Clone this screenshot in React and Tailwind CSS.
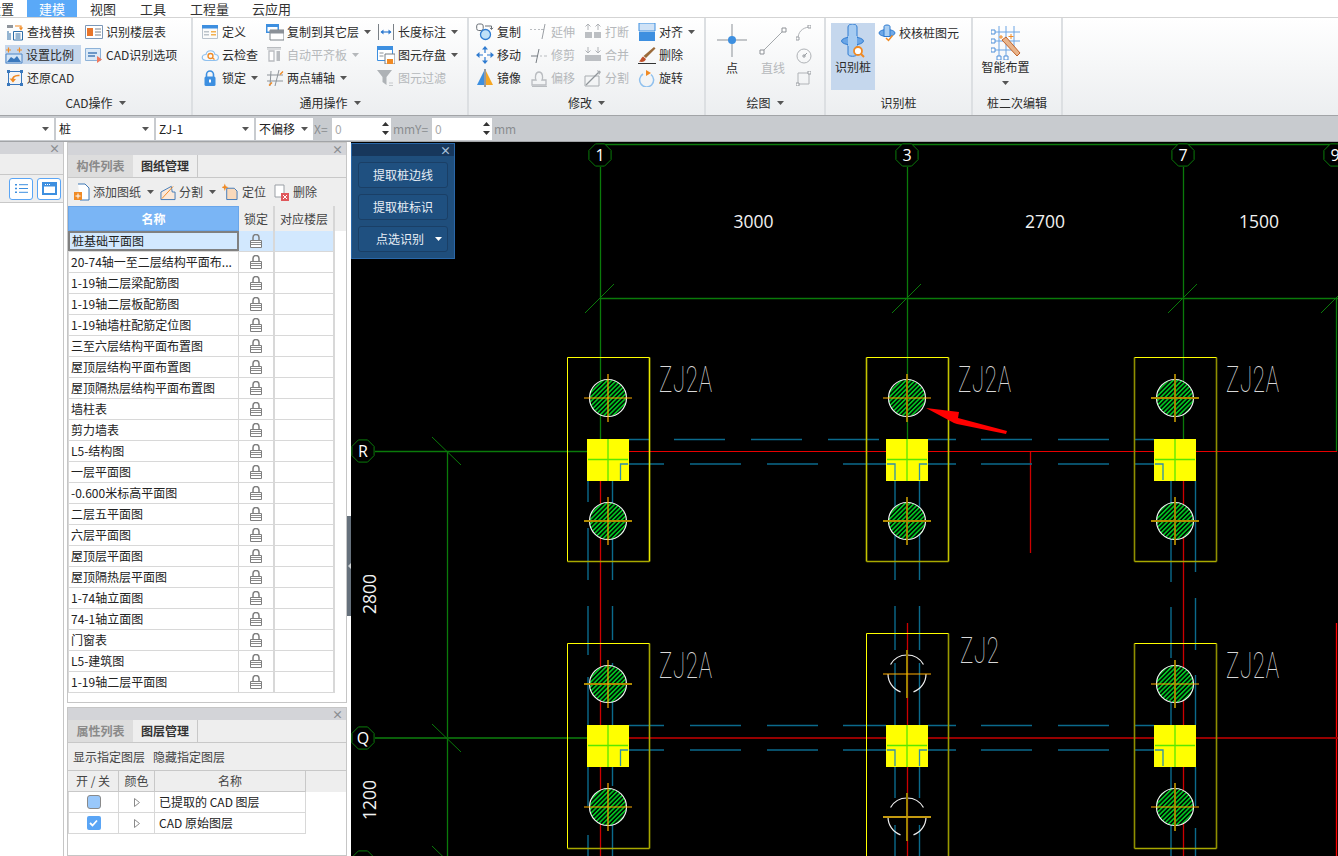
const files = [
  "桩基础平面图",
  "20-74轴一至二层结构平面布...",
  "1-19轴二层梁配筋图",
  "1-19轴二层板配筋图",
  "1-19轴墙柱配筋定位图",
  "三至六层结构平面布置图",
  "屋顶层结构平面布置图",
  "屋顶隔热层结构平面布置图",
  "墙柱表",
  "剪力墙表",
  "L5-结构图",
  "一层平面图",
  "-0.600米标高平面图",
  "二层五平面图",
  "六层平面图",
  "屋顶层平面图",
  "屋顶隔热层平面图",
  "1-74轴立面图",
  "74-1轴立面图",
  "门窗表",
  "L5-建筑图",
  "1-19轴二层平面图",
];

const BLUE = "#3d8fe0";
const ORANGE = "#f08a24";
const GRAY = "#b9bcc0";

function Svg({ size = 18, children, className = "" }) {
  return (
    <svg width={size} height={size} viewBox="0 0 18 18" fill="none" className={`shrink-0 ${className}`}>
      {children}
    </svg>
  );
}

const icons = {
  findReplace: (
    <Svg>
      <path d="M1 2h6v3H1z" fill="#8f959c" />
      <path d="M9 3h6v3M13.500 4.500L15 6.500 16.500 4.500" stroke={ORANGE} strokeWidth="1.200" />
      <path d="M7.500 8.500h9v8.500h-9z" stroke="#2f6ea8" />
      <path d="M9.500 11h5M9.500 13h5M9.500 15h5" stroke="#2f6ea8" />
      <path d="M2 8v9M4 10v7" stroke="#2f6ea8" />
    </Svg>
  ),
  scale: (
    <Svg>
      <path d="M1 8h16v9H1z" fill="#d5e5f5" stroke="#4f86c6" />
      <path d="M2 16l4-5 3 2 3-3 4 6z" fill="#3a78bd" />
      <path d="M1 4h5M3.500 1.500v5M12 4h5M14.500 1.500v5" stroke={ORANGE} strokeWidth="1.200" />
    </Svg>
  ),
  restore: (
    <Svg>
      <path d="M2.500 2.500h13v13h-13z" stroke="#3a78bd" />
      <path d="M1 1h3v3H1zM14 1h3v3h-3zM1 14h3v3H1zM14 14h3v3h-3z" fill="#3a78bd" />
      <path d="M7 12.500c-1.500-4 1.500-6.500 6.500-6" stroke={ORANGE} strokeWidth="1.600" />
      <path d="M3.500 9.500l3.500 4 3-3.500z" fill={ORANGE} />
    </Svg>
  ),
  floorTable: (
    <Svg>
      <path d="M.5 2.500h17v13H.5z" fill="#fff" stroke="#7c98b8" />
      <path d="M2 5h6v8H2z" fill="#e8752a" />
      <path d="M10 6h6M10 9h6M10 12h6" stroke="#7a8088" />
    </Svg>
  ),
  cadOption: (
    <Svg>
      <path d="M.5 2.500h15v12H.5z" fill="#dbe9f7" stroke="#8db2d8" />
      <path d="M3 7h9M3 10h7" stroke="#6b97c7" strokeWidth="2" />
      <path d="M12 10l5 3.500-5 3.500z" fill="#f07a60" />
    </Svg>
  ),
  define: (
    <Svg>
      <path d="M1.500 2.500h15v13h-15z" fill="#fbfbfb" stroke="#b9c2cc" />
      <path d="M1 2h16v3.500H1z" fill={BLUE} />
      <path d="M3 8h5v1.500H3zM3 11h5v1.500H3z" fill="#bcc3ca" />
      <path d="M10 8h5v1.500h-5zM10 11h5v1.500h-5z" fill="#f3b04f" />
    </Svg>
  ),
  cloud: (
    <Svg>
      <path d="M5 14.500c-5 0-5-6 0-6 1-5 8-5 9 0 4.500 0 4.500 6 0 6z" fill="#f6fafe" stroke="#8fc0ee" strokeWidth="1.200" />
      <circle cx="9.500" cy="10" r="2.500" stroke={ORANGE} strokeWidth="1.300" />
      <path d="M11.500 12l2 1.500" stroke={ORANGE} strokeWidth="1.300" />
    </Svg>
  ),
  lock: (
    <Svg>
      <path d="M5.500 8V5.500a3.500 3.500 0 017 0V8" stroke={BLUE} strokeWidth="1.600" />
      <rect x="3.500" y="7.500" width="11" height="9.500" rx="1.500" fill={BLUE} />
      <path d="M8 10.500h2v3H8z" fill="#fff" />
    </Svg>
  ),
  copyFloor: (
    <Svg>
      <path d="M0 1h13v9H0z" fill={BLUE} />
      <path d="M1.500 4h10v4.500h-10z" fill="#fff" />
      <path d="M4 7h14v10H4z" fill="#fff" stroke="#7d8389" />
      <path d="M4 7h14v3.500H4z" fill="#8b9198" />
    </Svg>
  ),
  autoAlign: (
    <Svg>
      <path d="M1 1.500h14M1 3h14" stroke={GRAY} />
      <path d="M3 5h5v10H3z" fill="#fff" stroke={GRAY} strokeWidth="1.300" />
      <path d="M10.500 5h3.500v10h-3.500z" fill={GRAY} />
    </Svg>
  ),
  twoPoint: (
    <Svg>
      <path d="M1 6h16M1 12h16M5 2l-1 15M13 1L9 17" stroke="#8d9399" />
      <path d="M3 16.500l3-3M14 5.500l3-3" stroke={ORANGE} strokeWidth="1.300" />
    </Svg>
  ),
  dimension: (
    <Svg>
      <path d="M1.500 1v16M16.500 1v16" stroke="#7a8086" />
      <path d="M4 9h10" stroke="#2f7bd0" strokeWidth="1.200" />
      <path d="M3.500 9l3-2.500v5zM14.500 9l-3-2.500v5z" fill="#2f7bd0" />
    </Svg>
  ),
  save: (
    <Svg>
      <path d="M.5 .5h15v14h-15z" fill="#fff" stroke={BLUE} />
      <path d="M0 0h16v4H0z" fill={BLUE} />
      <path d="M2.500 7h4M2.500 10h4" stroke="#8c9298" />
      <path d="M8 8h10v10H8z" fill="#fff" stroke="#777d83" />
      <path d="M10 13h6v5h-6z" fill={ORANGE} />
    </Svg>
  ),
  filter: (
    <Svg>
      <path d="M0 1h15L9.500 8v8l-4-3V8z" fill="#aeb2b6" />
      <path d="M12 14h4M12 16.500h4" stroke="#c6c9cc" />
    </Svg>
  ),
  copy: (
    <Svg>
      <rect x=".7" y="1" width="6.500" height="6.500" rx="2" stroke="#6b7178" />
      <circle cx="9.500" cy="11.500" r="5" fill="#bfe0f8" stroke="#2f7bd0" strokeWidth="1.300" />
      <path d="M9 3h6.500v3M14 4.800L15.500 6.500 17 4.800" stroke="#6b7178" />
    </Svg>
  ),
  extend: (
    <Svg>
      <path d="M0 6.500h2M4 6.500h2M8 6.500h2M11 6.500h3" stroke={GRAY} />
      <path d="M15 1l-3 15" stroke="#9b9fa4" />
    </Svg>
  ),
  trim: (
    <Svg>
      <path d="M1 10h7" stroke="#777d83" />
      <path d="M9 3L6 17" stroke="#777d83" />
      <path d="M10 10h2M14 10h3" stroke={GRAY} />
    </Svg>
  ),
  move: (
    <Svg>
      <path d="M9 1v16M1 9h16" stroke="#2f7bd0" strokeWidth="1.200" />
      <path d="M9 0l3 3.500H6zM9 18l3-3.500H6zM0 9l3.500-3v6zM18 9l-3.500-3v6z" fill="#2f7bd0" />
      <path d="M7 7h4v4H7z" fill="#fff" />
    </Svg>
  ),
  mirror: (
    <Svg>
      <path d="M8 2L1 16h7z" fill={BLUE} />
      <path d="M10 2l7 14h-7z" fill="#f6a623" />
      <path d="M9 0v18" stroke="#3b4046" />
    </Svg>
  ),
  breakIcon: (
    <Svg>
      <path d="M1 9h7v6H1zM10 9h7v6h-7z" fill="#bcbfc3" />
      <path d="M4 1v6M1.500 3.500L4 1l2.500 2.500M14 1v6M11.500 3.500L14 1l2.500 2.500" stroke="#b0b3b7" />
    </Svg>
  ),
  merge: (
    <Svg>
      <path d="M1 9h16v6H1z" fill="#bcbfc3" />
      <path d="M4 1v6M1.500 4.500L4 7l2.500-2.500M14 1v6M11.500 4.500L14 7l2.500-2.500" stroke="#b0b3b7" />
    </Svg>
  ),
  offset: (
    <Svg>
      <path d="M2 16v-5h4c-1-2-1-8 3-8s4 6 3 8h4v5z" stroke={GRAY} strokeWidth="1.300" />
      <path d="M2 17.500h15" stroke={GRAY} />
    </Svg>
  ),
  split: (
    <Svg>
      <path d="M1 7h14v10H1z" stroke="#a9adb1" />
      <path d="M2 16L16 2" stroke="#8f9499" strokeWidth="1.200" />
      <path d="M13 1l4 2-2 3z" fill="#a9adb1" />
    </Svg>
  ),
  align: (
    <Svg>
      <path d="M1 0h16v8H1z" fill="#cfe2f6" stroke={BLUE} />
      <path d="M1 9h16v9H1z" fill={BLUE} />
    </Svg>
  ),
  brush: (
    <Svg>
      <path d="M16 1l1.500 1.500L8 12 5.500 10z" fill="#9a6a3a" />
      <path d="M5 10.500l3 2.500c-1 3-4 3.500-7 2.500 1.500-1 2-3.500 4-5z" fill="#c0502a" />
      <path d="M0 17.500h18" stroke="#333" />
    </Svg>
  ),
  rotate: (
    <Svg>
      <path d="M5 5a7 7 0 108 .5" stroke="#8fc0ee" strokeWidth="1.500" />
      <path d="M8 1v6l5-3z" fill={ORANGE} />
    </Svg>
  ),
  pileCheck: (
    <Svg>
      <ellipse cx="9" cy="9" rx="8" ry="3.500" fill="#6fa8e6" stroke="#2f7bd0" />
      <path d="M6 2.500c0-2 6-2 6 0v10H6z" fill="#a9cef2" stroke="#2f7bd0" />
      <path d="M8 14l2.500 2.500 4-5" stroke={ORANGE} strokeWidth="1.500" />
    </Svg>
  ),
};

function Caret({ color = "#555" }) {
  return (
    <svg width="7" height="4" viewBox="0 0 7 4" className="shrink-0">
      <path d="M0 0h7L3.500 4z" fill={color} />
    </svg>
  );
}

function Tool({ icon, label, caret, off, active, className = "" }) {
  return (
    <div className={`flex h-[19px] items-center whitespace-nowrap ${active ? "bg-[#c5d7ed]" : ""} ${className}`}>
      {icons[icon]}
      <span className={`ml-[3px] ${off ? "text-[#b5b8bb]" : "text-[#2b2b2b]"}`}>{label}</span>
      {caret && (
        <span className="ml-[5px]">
          <Caret color={off ? "#b5b8bb" : "#555"} />
        </span>
      )}
    </div>
  );
}

function Group({ title, caret, width, children }) {
  return (
    <div className="flex h-full shrink-0 flex-col border-r-2 border-[#dcdfe2]" style={{ width }}>
      <div className="flex-1">{children}</div>
      <div className="mb-[3px] flex h-[18px] items-center justify-center gap-[6px] text-[#2b2b2b]">
        {title}
        {caret && <Caret />}
      </div>
    </div>
  );
}

function Stack({ className = "", children }) {
  return <div className={`flex flex-col gap-[4px] ${className}`}>{children}</div>;
}

function Select({ value, className = "" }) {
  return (
    <div className={`flex h-[22px] items-center justify-between bg-white pl-[3px] pr-[5px] text-[#222] ${className}`}>
      <span>{value}</span>
      <Caret />
    </div>
  );
}

function Spin({ className = "" }) {
  return (
    <div className={`flex h-[22px] items-center justify-between bg-white pl-[3px] pr-[2px] text-[#aaa] ${className}`}>
      0
      <div className="flex flex-col gap-[5px]">
        <svg width="7" height="4"><path d="M0 4h7L3.5 0z" fill="#333" /></svg>
        <Caret color="#333" />
      </div>
    </div>
  );
}

function PointIcon() {
  return (
    <svg width="30" height="34" viewBox="0 0 30 34">
      <path d="M0 16h30M15 0v33" stroke="#8b9197" />
      <circle cx="15" cy="16" r="4" fill={BLUE} />
    </svg>
  );
}

function LineIcon() {
  return (
    <svg width="30" height="30" viewBox="0 0 30 30">
      <path d="M4 26L26 4" stroke="#a4a8ac" />
      <path d="M2 24h4v4H2zM24 2h4v4h-4z" fill="#fff" stroke="#8d9196" />
    </svg>
  );
}

function PileIcon() {
  return (
    <svg width="26" height="36" viewBox="0 0 26 36">
      <path d="M8 3c0-4 9-4 9 0v27c0 3-9 3-9 0z" fill="#a6cbf1" stroke="#2f7bd0" />
      <ellipse cx="12.500" cy="17" rx="11" ry="4" fill="#6aa5e6" stroke="#2f7bd0" />
      <path d="M8 12h9v10H8z" fill="#a6cbf1" />
      <circle cx="18" cy="27" r="4" fill="#fff" stroke={ORANGE} strokeWidth="1.800" />
      <path d="M21 30l3 3" stroke={ORANGE} strokeWidth="2" />
    </svg>
  );
}

function SmartIcon() {
  return (
    <svg width="30" height="34" viewBox="0 0 30 34">
      <path d="M0 6h29M0 15h29M0 24h22M8 0v33M15 0v33M23 0v22" stroke="#6ba4e4" />
      <path d="M0 4h4v4H0zM0 13h4v4H0zM0 22h4v4H0zM6 30h4v4H6zM13 30h4v4h-4z" fill="#fff" stroke="#4f8fd8" />
      <path d="M11 14l4-3 14 16-3 3z" fill="#e9b48a" stroke="#c0622a" />
      <path d="M20 8v5M17.500 10.500h5M10 9v4M8 11h4" stroke={ORANGE} />
    </svg>
  );
}

function LockIcon() {
  return (
    <svg width="12" height="14" viewBox="0 0 12 14" className="mx-auto">
      <path d="M3 6.500V3.500a3 3 0 016 0v3" stroke="#7f7f7f" strokeWidth="1.500" fill="none" />
      <path d="M.5 6.500h11v7H.5z" fill="#fff" stroke="#7f7f7f" />
      <path d="M1 8.500h10M1 10.500h10" stroke="#8a8a8a" />
    </svg>
  );
}

function PanelHead() {
  return (
    <div className="flex h-[12px] items-center justify-end bg-[#d3d4d8] pr-[3px] text-[11px] font-bold leading-none text-[#8a8c90]">×</div>
  );
}

function Tabs({ off, on }) {
  return (
    <div className="flex h-[23px] border-b border-[#c8c8c8] bg-[#eeeeee] font-bold">
      <div className="flex w-[65px] items-center justify-center bg-[#dddddd] text-[#8a8a8a]">{off}</div>
      <div className="flex w-[65px] items-center justify-center border-r border-[#c8c8c8] text-[#333]">{on}</div>
    </div>
  );
}

function TreeArrow() {
  return (
    <svg width="6" height="9" viewBox="0 0 6 9" className="mx-auto">
      <path d="M.5 .5L5.500 4.500.5 8.500z" fill="#fff" stroke="#8a8a8a" />
    </svg>
  );
}

function DrawingPanel() {
  return (
    <div className="flex h-[561px] flex-col border border-[#c6c6c6] bg-white">
      <PanelHead />
      <Tabs off="构件列表" on="图纸管理" />
      <div className="flex h-[28px] items-center gap-[6px] bg-[#eeeeee] pl-[6px] text-[#444]">
        <span className="flex items-center gap-[3px]">
          <svg width="16" height="18" viewBox="0 0 16 18">
            <path d="M4 1h7l4 4v12H6" stroke="#3f78b5" fill="#fff" />
            <path d="M0 9h8v8H0z" fill={ORANGE} />
            <path d="M4 10.500v5M1.500 13h5" stroke="#fff" />
          </svg>
          添加图纸
          <span className="ml-[3px]"><Caret /></span>
        </span>
        <span className="flex items-center gap-[3px]">
          <svg width="16" height="17" viewBox="0 0 17 17">
            <path d="M1 8l11-6 1 6h3v8H1z" fill="#fbe9d9" stroke="#3f78b5" />
            <path d="M2 15l12-13" stroke={ORANGE} />
          </svg>
          分割
          <span className="ml-[3px]"><Caret /></span>
        </span>
        <span className="flex items-center gap-[4px]">
          <svg width="16" height="18" viewBox="0 0 17 18">
            <path d="M5 5h8l3 3v9H5z" fill="#f9d9bb" stroke="#3f78b5" />
            <path d="M3 0l1 3 3 1-3 1-1 3-1-3-3-1 3-1z" fill={ORANGE} />
          </svg>
          定位
        </span>
        <span className="ml-[2px] flex items-center gap-[3px]">
          <svg width="16" height="17" viewBox="0 0 16 17">
            <path d="M1 1h9v12H1z" fill="#fff" stroke="#9a9fa5" />
            <path d="M7 9h8v8H7z" fill="#e0575b" />
            <path d="M9 11l4 4M13 11l-4 4" stroke="#fff" />
          </svg>
          删除
        </span>
      </div>
      <div className="flex h-[25px] shrink-0 bg-[#eeeeee] text-[#444]">
        <div className="flex w-[171px] items-center justify-center border border-[#6aa6ea] bg-[#7ab5f5] font-bold text-white">名称</div>
        <div className="flex w-[36px] items-center justify-center border-r-2 border-[#d6d6d6]">锁定</div>
        <div className="flex w-[60px] items-center justify-center border-r-2 border-[#d6d6d6]">对应楼层</div>
      </div>
      {files.map((name, i) => (
        <div key={name} className={`flex h-[21px] w-[267px] shrink-0 border-b border-[#d8d8d8] text-[#222] ${i === 0 ? "bg-[#d2e8fe]" : ""}`}>
          <div className={`flex w-[171px] items-center whitespace-nowrap pl-[2px] ${i === 0 ? "border-2 border-[#808080] pl-[1px]" : "border-x border-[#d8d8d8]"}`}>{name}</div>
          <div className="flex w-[36px] items-center border-r-2 border-[#d8d8d8]"><LockIcon /></div>
          <div className="w-[60px] border-r-2 border-[#d8d8d8]" />
        </div>
      ))}
    </div>
  );
}

function LayerPanel() {
  return (
    <div className="mt-[4px] flex flex-1 flex-col border border-[#c6c6c6] bg-white">
      <PanelHead />
      <Tabs off="属性列表" on="图层管理" />
      <div className="flex h-[28px] items-center gap-[8px] border-b border-[#c8c8c8] bg-[#eeeeee] pl-[5px] text-[#444]">
        <span>显示指定图层</span>
        <span>隐藏指定图层</span>
      </div>
      <div className="flex h-[21px] bg-[#eeeeee] text-[#444]">
        <div className="flex w-[51px] items-center justify-center border-b border-r border-[#c8c8c8]">开 / 关</div>
        <div className="flex w-[36px] items-center justify-center border-b border-r border-[#c8c8c8]">颜色</div>
        <div className="flex w-[151px] items-center justify-center border-b border-r border-[#c8c8c8]">名称</div>
      </div>
      {[["已提取的 CAD 图层", false], ["CAD 原始图层", true]].map(([name, checked]) => (
        <div key={name} className="flex h-[21px] w-[238px] border-b border-[#d8d8d8] text-[#222]">
          <div className="flex w-[51px] items-center justify-center border-x border-[#d8d8d8]">
            {checked ? (
              <span className="flex h-[14px] w-[14px] items-center justify-center rounded-[2px] bg-[#5aa5f5]">
                <svg width="9" height="8" viewBox="0 0 9 8"><path d="M1 4l2.500 2.500L8 1.500" stroke="#fff" strokeWidth="1.800" fill="none" /></svg>
              </span>
            ) : (
              <span className="h-[14px] w-[14px] rounded-[3px] border border-[#8a8a8a] bg-[#99c8fb]" />
            )}
          </div>
          <div className="flex w-[36px] items-center border-r border-[#d8d8d8]"><TreeArrow /></div>
          <div className="flex flex-1 items-center border-r border-[#d8d8d8] pl-[4px]">{name}</div>
        </div>
      ))}
    </div>
  );
}

// CAD drawing, coordinates are page pixels
const lowDash = [[629, 664], [690, 741], [767, 818], [843, 886], [928, 956], [981, 1032], [1058, 1109], [1134, 1154]];
const topDash = [[629, 649], [674, 725], [751, 802], [828, 879], [928, 956], [981, 1032], [1058, 1109], [1134, 1154]];

const hSegs = (y, list) => list.map(([a, b]) => `M${a} ${y}H${b}`).join("");
const vSegs = (x, list) => list.map(([a, b]) => `M${x} ${a}V${b}`).join("");

const blueDash = [
  hSegs(439.5, topDash),
  hSegs(464, lowDash),
  hSegs(725.5, lowDash),
  hSegs(750, lowDash),
  vSegs(588, [[481, 502], [528, 580], [606, 655], [677, 725], [767, 806], [835, 856]]),
  vSegs(612.5, [[481, 580], [606, 640], [663, 725], [767, 786], [817, 856]]),
  vSegs(895, [[481, 580], [606, 650], [663, 725], [767, 798], [825, 856]]),
  vSegs(919.5, [[481, 580], [606, 650], [663, 725], [767, 798], [825, 856]]),
  vSegs(1171, [[481, 582], [607, 658], [685, 725], [767, 856]]),
  vSegs(1195.5, [[481, 572], [598, 650], [675, 725], [767, 806], [828, 856]]),
].join("");

function Tick({ x, y, flip }) {
  const d = flip ? `M${x - 15} ${y - 14}L${x + 14} ${y + 14}` : `M${x - 15} ${y + 15}L${x + 14} ${y - 14}`;
  return <path d={d} stroke="#0a7a0a" fill="none" />;
}

function Axis({ x, y, label }) {
  const pts = Array.from({ length: 8 }, (_, i) => {
    const a = (Math.PI / 4) * i + Math.PI / 8;
    return `${x + 12 * Math.cos(a)},${y + 12 * Math.sin(a)}`;
  }).join(" ");
  return (
    <g>
      <polygon points={pts} stroke="#0a7a0a" fill="#000" />
      <text x={x} y={y + 6} textAnchor="middle" fontSize="16" fill="#fff" fontFamily="'Open Sans', sans-serif">{label}</text>
    </g>
  );
}

// h / v: true draws that arm of the cross in the dull, thicker orange
function Pile({ x, y, h, v }) {
  return (
    <g>
      <circle cx={x} cy={y} r="18.500" fill="url(#hatch)" stroke="#f0f0f0" strokeWidth="1.200" />
      <path d={`M${x - 24} ${y}H${x + 24}`} stroke={h ? "#b08a00" : "#ffae00"} strokeWidth={h ? 1.8 : 1.2} />
      <path d={`M${x} ${y - 24}V${y + 24}`} stroke={v ? "#b08a00" : "#ffae00"} strokeWidth={v ? 1.8 : 1.2} />
    </g>
  );
}

function OpenPile({ x, y, h }) {
  const r = 19;
  const pt = (deg) => `${x + r * Math.cos((deg * Math.PI) / 180)} ${y + r * Math.sin((deg * Math.PI) / 180)}`;
  return (
    <g>
      <path
        d={`M${pt(-150)}A${r} ${r} 0 0 1 ${pt(-30)}M${pt(0)}A${r} ${r} 0 0 1 ${pt(70)}M${pt(110)}A${r} ${r} 0 0 1 ${pt(180)}`}
        stroke="#f0f0f0"
        strokeWidth="1.200"
        fill="none"
      />
      <path d={`M${x} ${y - 24}V${y + 24}`} stroke="#a08200" strokeWidth="2" />
      <path d={`M${x - 24} ${y}H${x + 24}`} stroke={h ? "#c49a10" : "#ffae00"} strokeWidth={h ? 1.8 : 1.2} />
    </g>
  );
}

function Cap({ cx, y, lx, rx }) {
  const x = cx - 21;
  return (
    <g>
      <rect x={x} y={y} width="42" height="42" fill="#ffff00" />
      <path d={`M${x + 1} ${y + 20.5}H${x + 41}M${cx} ${y}V${y + 42}`} stroke="#58e800" strokeWidth="1.300" />
      {lx && <path d={`M${x + 1} ${y + 25}H${x + 9}V${y + 41}`} stroke="#2f8fa8" strokeWidth="1.300" fill="none" />}
      {rx && <path d={`M${x + 41} ${y + 25}H${x + 33.500}V${y + 41}`} stroke="#2f8fa8" strokeWidth="1.300" fill="none" />}
    </g>
  );
}

function Label({ x, y, text }) {
  return (
    <text
      transform={`translate(${x} ${y}) scale(0.62 1)`}
      fontSize="36"
      fontWeight="100"
      letterSpacing="1"
      fill="#d8d8d8"
      fontFamily="Roboto, sans-serif"
    >
      {text}
    </text>
  );
}

function PileFrame({ x, top, bottom, side, open }) {
  return (
    <g fill="none">
      <path d={`M${x} ${bottom}V${top}`} stroke={side[0]} strokeWidth={side[0] === "#ffff00" ? 1 : 1.600} />
      <path d={`M${x + 82} ${top}V${bottom}`} stroke={side[1]} strokeWidth={side[1] === "#ffff00" ? 1 : 1.600} />
      <path d={`M${x} ${top}H${x + 82}`} stroke="#ffff00" />
      {!open && <path d={`M${x} ${bottom}H${x + 82}`} stroke="#a8a800" strokeWidth="1.600" />}
    </g>
  );
}

function Drawing() {
  return (
    <svg className="block" width="987" height="714" viewBox="351 142 987 714">
      <defs>
        <pattern id="hatch" patternUnits="userSpaceOnUse" width="3.200" height="3.200" patternTransform="rotate(-45)">
          <rect width="3.200" height="3.200" fill="#000" />
          <rect width="3.200" height="1.700" fill="#00c422" />
        </pattern>
      </defs>

      <g fill="none">
        <path d="M600.500 167V440M907.500 167V440M1183.500 167V440M1336.500 298V451M447.500 451V856" stroke="#0a7a0a" strokeWidth="1.300" />
        <path d="M600 144.500H1338M600 298.500H1338M375 451.500H587" stroke="#0a7a0a" strokeWidth="1.300" />
        <path d="M375 738H587" stroke="#0a5f0a" strokeWidth="2" />
        <path d="M600.500 481V856M1183.500 481V856M907.500 623V856M1030.500 451V553" stroke="#cc0000" strokeWidth="1.300" />
        <path d="M1336.500 623V856" stroke="#ff0000" strokeWidth="1.300" />
        <path d="M629 451.500H1337" stroke="#e80000" strokeWidth="1.200" />
        <path d="M629 738H1338" stroke="#960000" strokeWidth="2" />
        <path d={blueDash} stroke="#0b6a8c" strokeWidth="1.400" />
      </g>

      <Tick x={600} y={298} />
      <Tick x={907} y={298} />
      <Tick x={1183} y={298} />
      <Tick x={1336} y={298} />
      <Tick x={447} y={451} flip />
      <Tick x={447} y={738} flip />
      <Tick x={447} y={860} flip />

      <Axis x={600} y={155} label="1" />
      <Axis x={907} y={155} label="3" />
      <Axis x={1183} y={155} label="7" />
      <Axis x={1335} y={155} label="9" />
      <Axis x={363} y={451} label="R" />
      <Axis x={363} y={738} label="Q" />
      <Axis x={363} y={862} label="P" />

      <g fill="#f2f2f2" fontSize="17.500" fontFamily="'Open Sans', sans-serif" textAnchor="middle">
        <text x="753.500" y="228">3000</text>
        <text x="1045" y="228">2700</text>
        <text x="1259" y="228">1500</text>
        <text transform="translate(376 594) rotate(-90)">2800</text>
        <text transform="translate(376 800) rotate(-90)">1200</text>
      </g>

      <PileFrame x={567.5} top={357.5} bottom={561.5} side={["#ffff00", "#e8e800"]} />
      <PileFrame x={866.5} top={357.5} bottom={561.5} side={["#c4c400", "#c4c400"]} />
      <PileFrame x={1134.5} top={357.5} bottom={561.5} side={["#8f8f00", "#8f8f00"]} />
      <PileFrame x={567.5} top={643.5} bottom={848.5} side={["#ffff00", "#a8a800"]} />
      <PileFrame x={1134.5} top={643.5} bottom={848.5} side={["#8f8f00", "#8f8f00"]} />
      <PileFrame x={866.5} top={633.5} bottom={857} side={["#ffff00", "#9a9a00"]} open />

      <Pile x={608} y={398} />
      <Pile x={608} y={521} h />
      <Pile x={907} y={398} v />
      <Pile x={907} y={521} h v />
      <Pile x={1175} y={398} h v />
      <Pile x={1175} y={521} h v />
      <Pile x={608} y={684} h />
      <Pile x={608} y={807} />
      <Pile x={1175} y={684} v />
      <Pile x={1175} y={807} v />
      <OpenPile x={907} y={674} />
      <OpenPile x={907} y={817} h />

      <Cap cx={608} y={439} rx />
      <Cap cx={907} y={439} lx rx />
      <Cap cx={1175} y={439} lx />
      <Cap cx={608} y={725} rx />
      <Cap cx={907} y={725} lx rx />
      <Cap cx={1175} y={725} lx />

      <Label x={659} y={392} text="ZJ2A" />
      <Label x={958} y={392} text="ZJ2A" />
      <Label x={1226} y={392} text="ZJ2A" />
      <Label x={659} y={678} text="ZJ2A" />
      <Label x={1226} y={678} text="ZJ2A" />
      <Label x={960} y={663} text="ZJ2" />

      <polygon points="926,408 959,412 958,418 1007,431 1006,434 957,424 954,423" fill="#ff0000" />
    </svg>
  );
}

function FloatPanel() {
  return (
    <div className="absolute left-0 top-[1px] flex h-[116px] w-[104px] flex-col border border-[#2a67a8] bg-[#1f4e7c] text-[#e8eef5]">
      <div className="flex h-[12px] items-center justify-end bg-[#17375c] pr-[3px] text-[11px] font-bold leading-none text-[#a9c3dc]">×</div>
      <div className="flex flex-col gap-[6px] px-[6px] pt-[6px]">
        <div className="flex h-[26px] items-center justify-center rounded-[3px] border border-[#1a3f66] bg-[#1f5080]">提取桩边线</div>
        <div className="flex h-[26px] items-center justify-center rounded-[3px] border border-[#1a3f66] bg-[#1f5080]">提取桩标识</div>
        <div className="flex h-[26px] items-center justify-between rounded-[3px] border border-[#1a3f66] bg-[#1f5080] pl-[17px] pr-[5px]">
          点选识别
          <Caret color="#fff" />
        </div>
      </div>
    </div>
  );
}

export default function App() {
  return (
    <div className="flex h-[856px] w-[1338px] flex-col overflow-hidden bg-white font-['Noto_Sans_CJK_SC','Liberation_Sans',sans-serif] text-[12px] leading-none">
      {/* menu */}
      <div className="flex h-[18px] shrink-0 items-center border-b border-[#d4d4d4] text-[13px] text-[#333]">
        <span className="ml-[-12px] w-[39px]">设置</span>
        <span className="flex h-full w-[50px] items-center justify-center bg-[#5aa9f8] text-white">建模</span>
        <span className="ml-[13px] w-[50px]">视图</span>
        <span className="w-[50px]">工具</span>
        <span className="w-[62px]">工程量</span>
        <span>云应用</span>
      </div>

      {/* ribbon */}
      <div className="flex h-[97px] shrink-0 items-stretch bg-gradient-to-b from-white to-[#eceef0]">
        <Group title="CAD操作" caret width={193}>
          <div className="flex gap-[4px] pl-[6px] pt-[4px]">
            <Stack className="w-[75px]">
              <Tool icon="findReplace" label="查找替换" />
              <Tool icon="scale" label="设置比例" active className="-ml-px" />
              <Tool icon="restore" label="还原CAD" />
            </Stack>
            <Stack>
              <Tool icon="floorTable" label="识别楼层表" />
              <Tool icon="cadOption" label="CAD识别选项" />
            </Stack>
          </div>
        </Group>
        <Group title="通用操作" caret width={276}>
          <div className="flex pl-[8px] pt-[4px]">
            <Stack className="w-[65px]">
              <Tool icon="define" label="定义" />
              <Tool icon="cloud" label="云检查" />
              <Tool icon="lock" label="锁定" caret />
            </Stack>
            <Stack className="w-[111px]">
              <Tool icon="copyFloor" label="复制到其它层" caret />
              <Tool icon="autoAlign" label="自动平齐板" caret off />
              <Tool icon="twoPoint" label="两点辅轴" caret />
            </Stack>
            <Stack>
              <Tool icon="dimension" label="长度标注" caret />
              <Tool icon="save" label="图元存盘" caret />
              <Tool icon="filter" label="图元过滤" off />
            </Stack>
          </div>
        </Group>
        <Group title="修改" caret width={237}>
          <div className="flex pl-[7px] pt-[4px]">
            <Stack className="w-[54px]">
              <Tool icon="copy" label="复制" />
              <Tool icon="move" label="移动" />
              <Tool icon="mirror" label="镜像" />
            </Stack>
            <Stack className="w-[54px]">
              <Tool icon="extend" label="延伸" off />
              <Tool icon="trim" label="修剪" off />
              <Tool icon="offset" label="偏移" off />
            </Stack>
            <Stack className="w-[54px]">
              <Tool icon="breakIcon" label="打断" off />
              <Tool icon="merge" label="合并" off />
              <Tool icon="split" label="分割" off />
            </Stack>
            <Stack>
              <Tool icon="align" label="对齐" caret />
              <Tool icon="brush" label="删除" />
              <Tool icon="rotate" label="旋转" />
            </Stack>
          </div>
        </Group>
        <Group title="绘图" caret width={120}>
          <div className="flex pl-[11px] pt-[6px]">
            <div className="flex w-[30px] flex-col items-center gap-[4px]">
              <PointIcon />
              <span className="text-[#2b2b2b]">点</span>
            </div>
            <div className="ml-[11px] flex w-[30px] flex-col items-center gap-[6px] pt-[2px]">
              <LineIcon />
              <span className="text-[#b5b8bb]">直线</span>
            </div>
            <div className="ml-[8px] flex flex-col gap-[7px] pt-[1px]">
              <svg width="15" height="16" viewBox="0 0 15 16"><path d="M2 14C2 7 6 3 13 2" stroke="#b0b3b7" fill="none" /><path d="M0 12h3v3H0zM12 0h3v3h-3z" fill="#fff" stroke="#9a9ea3" /></svg>
              <svg width="16" height="16" viewBox="0 0 16 16"><circle cx="8" cy="8" r="7" stroke="#b0b3b7" fill="none" /><path d="M7 7h2v2H7zM8 8l3-3" stroke="#9a9ea3" fill="none" /></svg>
              <svg width="15" height="15" viewBox="0 0 15 15"><path d="M2 2h11v11H2z" stroke="#b0b3b7" fill="none" /><path d="M12 0h3v3h-3zM0 12h3v3H0z" fill="#fff" stroke="#9a9ea3" /></svg>
            </div>
          </div>
        </Group>
        <Group title="识别桩" width={147}>
          <div className="flex pl-[5px] pt-[5px]">
            <div className="flex h-[67px] w-[44px] flex-col items-center gap-[1px] bg-[#c5d7ed] pt-[1px]">
              <PileIcon />
              <span className="text-[#2b2b2b]">识别桩</span>
            </div>
            <div className="ml-[3px]">
              <Tool icon="pileCheck" label="校核桩图元" />
            </div>
          </div>
        </Group>
        <Group title="桩二次编辑" width={90}>
          <div className="flex w-[65px] flex-col items-center pt-[8px]">
            <SmartIcon />
            <span className="mt-[1px] text-[#2b2b2b]">智能布置</span>
            <span className="mt-[8px]"><Caret /></span>
          </div>
        </Group>
      </div>

      {/* property bar */}
      <div className="flex h-[27px] shrink-0 items-center border-y border-[#a2a4a7] bg-[#c8cbcf] text-[#8a8d90]">
        <Select value="" className="w-[54px]" />
        <Select value="桩" className="ml-[2px] w-[98px]" />
        <Select value="ZJ-1" className="ml-[2px] w-[98px]" />
        <Select value="不偏移" className="ml-[2px] w-[57px]" />
        <span className="ml-[1px] w-[18px]">X=</span>
        <Spin className="w-[59px]" />
        <span className="ml-[2px] w-[39px]">mmY=</span>
        <Spin className="w-[60px]" />
        <span className="ml-[2px]">mm</span>
      </div>

      <div className="flex min-h-0 flex-1">
        {/* left docks */}
        <div className="relative flex w-[351px] shrink-0 bg-white">
          <div className="w-[64px] shrink-0 border-r border-[#c6c6c6]">
            <PanelHead />
            <div className="h-[21px] border-b border-[#c8c8c8] bg-[#eeeeee]" />
            <div className="flex h-[28px] items-center justify-end gap-[4px] border-b border-[#c8c8c8] bg-[#eeeeee] pr-[2px]">
              <span className="flex h-[22px] w-[24px] items-center justify-center rounded-[3px] border border-[#5aa5f5] bg-white">
                <svg width="13" height="11" viewBox="0 0 13 11"><path d="M0 1h2v1.500H0zM0 4.700h2v1.500H0zM0 8.500h2V10H0z" fill={BLUE} /><path d="M4 1.700h9M4 5.500h9M4 9.300h9" stroke={BLUE} /></svg>
              </span>
              <span className="flex h-[22px] w-[24px] items-center justify-center rounded-[3px] border border-[#5aa5f5] bg-white">
                <svg width="15" height="13" viewBox="0 0 15 13"><path d="M0 0h15v13H0z" fill={BLUE} /><path d="M2 4.500h11V11H2z" fill="#fff" /><path d="M3 2h1v1H3zM5 2h1v1H5zM7 2h1v1H7z" fill="#fff" /></svg>
              </span>
            </div>
          </div>
          <div className="ml-[3px] flex w-[280px] shrink-0 flex-col">
            <DrawingPanel />
            <LayerPanel />
          </div>
          <div className="absolute left-[347px] top-[374px] flex h-[100px] w-[4px] items-center justify-center bg-[#66717c]">
            <svg width="3" height="6"><path d="M3 0v6L0 3z" fill="#cfd3d6" /></svg>
          </div>
        </div>

        {/* canvas */}
        <div className="relative min-w-0 flex-1 overflow-hidden bg-black">
          <Drawing />
          <FloatPanel />
        </div>
      </div>
    </div>
  );
}
